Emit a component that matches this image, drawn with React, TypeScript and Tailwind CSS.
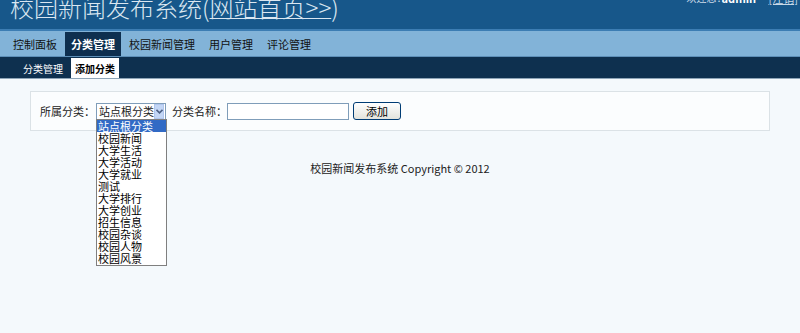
import React from "react";

const font = { fontFamily: '"Noto Sans CJK SC","Liberation Sans",sans-serif' };

const options = [
  "站点根分类",
  "校园新闻",
  "大学生活",
  "大学活动",
  "大学就业",
  "测试",
  "大学排行",
  "大学创业",
  "招生信息",
  "校园杂谈",
  "校园人物",
  "校园风景",
];

export default function App() {
  return (
    <div
      className="w-[800px] h-[333px] overflow-hidden bg-[#f4f9fc] text-[#222]"
      style={font}
    >
      {/* header */}
      <div className="h-[29px] bg-[#17578a] flex items-start justify-between overflow-hidden">
        <div className="pl-[10px] -mt-[8px] text-[24px] leading-[30px] font-light text-[#dbe7f1] whitespace-nowrap">
          校园新闻发布系统(<span className="underline decoration-1 underline-offset-[1px]">网站首页&gt;&gt;</span>)
        </div>
        <div className="pr-[2px] -mt-[9px] text-[11px] leading-[14px] text-[#c9d9e7] whitespace-nowrap flex items-center">
          <span className="text-[10px] w-[35px]">欢迎您：</span>
          <span className="font-bold text-white w-[47px]">admin</span>
          <span className="underline">[注销]</span>
        </div>
      </div>
      <div className="h-[2px] bg-[#3c7db3]" />
      {/* main nav */}
      <div className="h-[26px] bg-[#82b3d8] border-b border-[#5d8fb8] flex items-end pl-[7px] gap-[2px] text-[11px]">
        <div className="h-[24px] px-[6px] flex items-center text-[#111]">控制面板</div>
        <div className="h-[24px] px-[6px] flex items-center bg-[#0e2f4f] text-white font-bold">分类管理</div>
        <div className="h-[24px] px-[6px] flex items-center text-[#111]">校园新闻管理</div>
        <div className="h-[24px] px-[6px] flex items-center text-[#111]">用户管理</div>
        <div className="h-[24px] px-[6px] flex items-center text-[#111]">评论管理</div>
      </div>
      {/* sub nav */}
      <div className="h-[22px] bg-[#0e304f] border-b border-[#8ea5b8] flex items-end pl-[19px] gap-[4px] text-[10px]">
        <div className="h-[20px] px-[4px] flex items-center text-white">分类管理</div>
        <div className="h-[20px] px-[4px] flex items-center bg-white text-black font-bold">添加分类</div>
      </div>
      {/* content */}
      <div className="pt-[12px] px-[30px]">
        <div className="h-[40px] border border-[#dbe2e6] bg-[#fbfdfe] flex items-center pl-[9px] text-[11px]">
          <span className="w-[56px] whitespace-nowrap">所属分类：</span>
          <div className="relative">
            <div className="w-[70px] h-[17px] border border-[#7f9db9] bg-white flex items-center">
              <span className="pl-[2px] flex-1 leading-none whitespace-nowrap">站点根分类</span>
              <div className="w-[13px] h-[15px] mr-[1px] bg-[#c3d6f5] border border-[#b0c6ee] flex items-center justify-center">
                <svg width="7" height="5" viewBox="0 0 7 5">
                  <path d="M0.5 0.8 L3.5 3.8 L6.5 0.8" stroke="#4d6185" strokeWidth="1.6" fill="none" />
                </svg>
              </div>
            </div>
            <div className="absolute left-0 top-[16px] w-[71px] border border-[#7f7f7f] bg-white z-10 pb-[1px]">
              {options.map((o, i) => (
                <div
                  key={o}
                  className={
                    "h-[12px] leading-[12px] pl-[1px] text-[11px] whitespace-nowrap " +
                    (i === 0 ? "bg-[#316ac5] text-white" : "text-black")
                  }
                >
                  {o}
                </div>
              ))}
            </div>
          </div>
          <span className="ml-[6px] w-[55px] whitespace-nowrap">分类名称：</span>
          <div className="w-[122px] h-[17px] border border-[#7f9db9] bg-white" />
          <button className="ml-[4px] w-[48px] h-[18px] border border-[#003c74] rounded-[3px] bg-gradient-to-b from-white to-[#e3e3dc] text-[11px] leading-none text-black">
            添加
          </button>
        </div>
        <div className="mt-[29px] text-center text-[11px] text-[#222]">
          校园新闻发布系统 Copyright © 2012
        </div>
      </div>
    </div>
  );
}
